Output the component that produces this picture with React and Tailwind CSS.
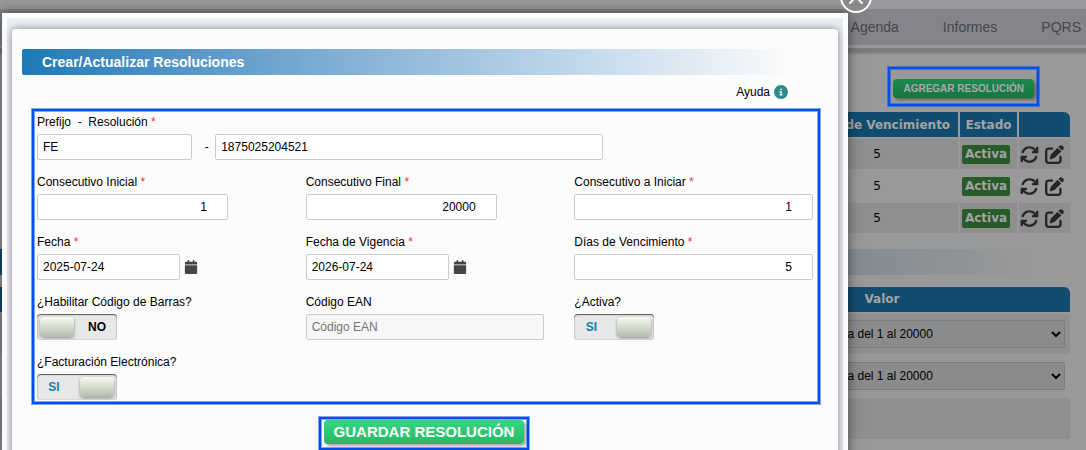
import { useState } from "react";
import { FaArrowsRotate, FaCalendar, FaCircleInfo, FaPenToSquare } from "react-icons/fa6";

const menu = ["Agenda", "Informes", "PQRS"];

const resoluciones = [
  { id: 1, vencimiento: 5, estado: "Activa" },
  { id: 2, vencimiento: 5, estado: "Activa" },
  { id: 3, vencimiento: 5, estado: "Activa" }
];

const inputClass =
  "h-[26px] rounded-xs border border-[#ccc] bg-white px-[5px] text-xs text-black outline-none disabled:bg-[#f7f7f7] placeholder:text-[#757575]";

const frameClass =
  "border-2 border-[#0050e8] shadow-[0_0_0_1px_rgba(0,80,232,0.5),inset_0_0_0_1px_rgba(0,80,232,0.5)]";

function Field({ id, label, required, children }) {
  return (
    <div className="min-w-0">
      <label htmlFor={id} className="mb-1 block h-[18px] text-xs leading-5 whitespace-pre">
        {label}
        {required && <span className="text-red-500"> *</span>}
      </label>
      {children}
    </div>
  );
}

function NumberField({ id, label, defaultValue, width }) {
  return (
    <Field id={id} label={label} required>
      <input id={id} defaultValue={defaultValue} className={`${inputClass} ${width} pr-5 text-right`} />
    </Field>
  );
}

function DateField({ id, label, defaultValue }) {
  return (
    <Field id={id} label={label} required>
      <div className="flex items-center gap-1">
        <input id={id} defaultValue={defaultValue} className={`${inputClass} w-3/5`} />
        <button type="button" aria-label="Calendario">
          <FaCalendar className="h-3.5 w-3.5 text-[#444]" />
        </button>
      </div>
    </Field>
  );
}

function Toggle({ id, label, initial = false }) {
  const [checked, setChecked] = useState(initial);

  return (
    <Field id={id} label={label}>
      <label
        htmlFor={id}
        className={`relative flex h-[26px] w-20 cursor-pointer items-center justify-between rounded-sm bg-[#e8e8e8] px-[3px] text-xs font-bold shadow-[inset_0_1px_1px_rgba(0,0,0,0.6),inset_0_0_2px_rgba(0,0,0,0.25)] ${
          checked ? "flex-row-reverse text-[#0e7fb0]" : "text-black"
        }`}
      >
        <input
          id={id}
          type="checkbox"
          checked={checked}
          onChange={(e) => setChecked(e.target.checked)}
          className="sr-only"
        />
        <span className="h-5 w-[34px] rounded-sm bg-linear-to-b from-[#f8fbf0] to-[#b3bdac] shadow-[0_1px_3px_rgba(0,0,0,0.4)]" />
        <span className={checked ? "w-7 grow pr-3 text-center" : "w-[34px] text-center"}>{checked ? "SI" : "NO"}</span>
      </label>
    </Field>
  );
}

function Page() {
  return (
    <div className="font-['DejaVu_Sans'] text-xs">
      <div className="h-[9px]" />
      <nav className="flex h-9 items-center justify-end gap-11 bg-[#858589] pr-[5px] font-['Liberation_Sans'] text-sm text-[#43474c]">
        {menu.map((item) => (
          <a key={item} href="#">
            {item}
          </a>
        ))}
      </nav>
      <div className="mt-[3px] h-1.5 border-b-2 border-[#858585] bg-[#787c7c]" />

      <main className="pr-3.5">
        <div className="mt-[13px] flex h-[45px] justify-end pr-[33px]">
          <div className={`${frameClass} h-[39px] px-[3px] pt-2.5`}>
            <button
              type="button"
              className="block h-[19px] rounded-sm bg-linear-to-b from-[#1d8a50] to-[#187540] px-2.5 font-['Liberation_Sans'] text-[10px] font-bold text-[#a9a9a9] shadow-[2px_2px_3px_rgba(0,0,0,0.35)]"
            >
              AGREGAR RESOLUCIÓN
            </button>
          </div>
        </div>

        <table className="w-full table-fixed border-separate border-spacing-x-0.5 border-spacing-y-0 text-center">
          <colgroup>
            <col />
            <col className="w-[162px]" />
            <col className="w-[57px]" />
            <col className="w-[51px]" />
          </colgroup>
          <thead>
            <tr className="h-[25px] text-[#a3a3a3] [&>th]:bg-[#124d70]">
              <th>Resolución</th>
              <th className="pl-2 whitespace-nowrap">Días de Vencimiento</th>
              <th>Estado</th>
              <th className="rounded-tr-md" aria-label="Acciones" />
            </tr>
          </thead>
          <tbody>
            {resoluciones.map((r) => (
              <tr key={r.id} className="h-8 odd:[&>td]:bg-[#8f8f8f] [&>td]:border-t-2 [&>td]:border-[#999]">
                <td className="p-0" />
                <td className="p-0">{r.vencimiento}</td>
                <td className="p-0 pl-0.5 text-left">
                  <span className="inline-block h-[19px] w-12 rounded-xs bg-[#255c29] text-center leading-[19px] font-bold text-[#a3a3a3]">
                    {r.estado}
                  </span>
                </td>
                <td className="p-0">
                  <div className="flex gap-1.5 pl-px text-[#252525]">
                    <button type="button" aria-label="Actualizar">
                      <FaArrowsRotate size={19} />
                    </button>
                    <button type="button" aria-label="Editar">
                      <FaPenToSquare size={19} />
                    </button>
                  </div>
                </td>
              </tr>
            ))}
          </tbody>
        </table>

        <div className="mt-4 mr-10 h-[26px] bg-linear-to-r from-[#124d70] to-[#999]" />

        <div className="mt-3 mr-0.5 grid grid-cols-[1fr_376px]">
          <div className="h-[25px] bg-[#124d70]" />
          <div className="h-[25px] rounded-tr-md bg-[#124d70] text-center leading-[25px] font-bold text-[#a3a3a3]">Valor</div>
          {["Facturación", "Contingencia"].map((name, i) => (
            <div
              key={name}
              className={`col-span-2 mt-0.5 flex h-10 items-center justify-end pr-[5px] ${i === 0 ? "bg-[#8f8f8f]" : ""}`}
            >
              <select
                aria-label={name}
                className="h-7 w-[366px] rounded-xs border border-[#7c7c7c] bg-[#8b8b8b] px-1 font-['Liberation_Sans'] text-xs text-black"
              >
                <option>1875025204521 Numerada del 1 al 20000</option>
              </select>
            </div>
          ))}
          <div className="col-span-2 mt-0.5 h-[41px] bg-[#8f8f8f]" />
        </div>
      </main>
    </div>
  );
}

function ResolucionModal() {
  return (
    <div
      role="dialog"
      aria-label="Crear/Actualizar Resoluciones"
      className="relative min-w-0 flex-1 border-5 border-white bg-[#ebeef4] px-[5px] pt-[11px] font-['Liberation_Sans'] text-xs text-black shadow-[0_0_12px_rgba(0,0,0,0.5)]"
    >
      <button
        type="button"
        aria-label="Cerrar"
        className="absolute -top-[37px] -right-[29px] grid h-8 w-8 place-items-center rounded-full border-2 border-white bg-[#888] text-white"
      >
        <svg viewBox="0 0 16 16" className="h-4 w-4" fill="none" stroke="currentColor" strokeWidth="2" strokeLinecap="round">
          <path d="M2 2l12 12M14 2L2 14" />
        </svg>
      </button>

      <form className="h-[500px] rounded-t-sm bg-[#fcfcfc] px-2.5 pt-5 shadow-[0_0_8px_rgba(0,0,0,0.45)]" onSubmit={(e) => e.preventDefault()}>
        <h2 className="mr-9 h-[26px] rounded-xs bg-linear-to-r from-[#1b7ab7] to-[#fcfcfc] pl-5 text-sm leading-[26px] font-bold text-white">
          Crear/Actualizar Resoluciones
        </h2>

        <div className="flex h-[34px] items-center justify-end pr-10">
          <a href="#" className="flex items-center gap-1">
            Ayuda
            <FaCircleInfo className="h-3.5 w-3.5 text-[#2f8a8c]" />
          </a>
        </div>

        <div className={`${frameClass} mr-2 ml-2.5 grid grid-cols-3 gap-x-[30px] gap-y-3 pt-px pr-[5px] pb-0.5 pl-[3px]`}>
          <div className="col-span-3">
            <Field id="prefijo" label="Prefijo  -  Resolución" required>
              <div className="flex items-center">
                <input id="prefijo" defaultValue="FE" className={`${inputClass} w-1/5`} />
                <span className="w-[23px] pl-1.5 text-center">-</span>
                <input aria-label="Resolución" defaultValue="1875025204521" className={`${inputClass} w-1/2`} />
              </div>
            </Field>
          </div>

          <NumberField id="inicial" label="Consecutivo Inicial" defaultValue="1" width="w-4/5" />
          <NumberField id="final" label="Consecutivo Final" defaultValue="20000" width="w-4/5" />
          <NumberField id="iniciar" label="Consecutivo a Iniciar" defaultValue="1" width="w-full" />

          <DateField id="fecha" label="Fecha" defaultValue="2025-07-24" />
          <DateField id="vigencia" label="Fecha de Vigencia" defaultValue="2026-07-24" />
          <NumberField id="dias" label="Días de Vencimiento" defaultValue="5" width="w-full" />

          <Toggle id="barras" label="¿Habilitar Código de Barras?" />
          <Field id="ean" label="Código EAN">
            <input id="ean" placeholder="Código EAN" disabled className={`${inputClass} w-full`} />
          </Field>
          <Toggle id="activa" label="¿Activa?" initial />

          <Toggle id="electronica" label="¿Facturación Electrónica?" initial />
        </div>

        <div className="mt-[13px] flex justify-center pr-0.5">
          <div className={`${frameClass} px-[3px] pt-px pb-1`}>
            <button
              type="submit"
              className="block h-6 rounded-sm bg-linear-to-b from-[#33d880] to-[#25b865] px-2.5 text-[15px] leading-6 font-bold text-white shadow-[2px_2px_3px_rgba(0,0,0,0.35)]"
            >
              GUARDAR RESOLUCIÓN
            </button>
          </div>
        </div>
      </form>
    </div>
  );
}

export default function App() {
  return (
    <div className="relative h-screen overflow-hidden bg-[#999]">
      <Page />
      <div className="absolute inset-0 flex items-start pt-[13px] pr-[238px] pl-0.5">
        <ResolucionModal />
      </div>
    </div>
  );
}
